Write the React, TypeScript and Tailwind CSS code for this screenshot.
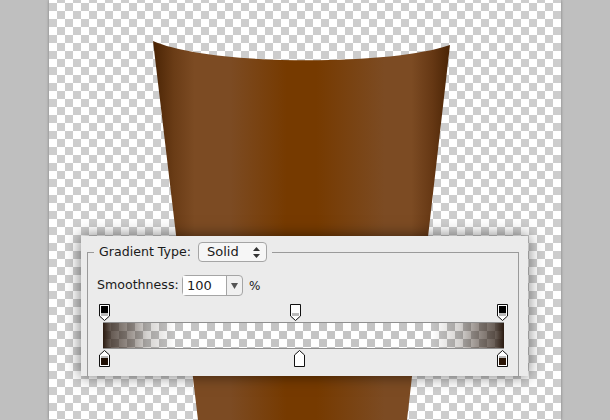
const Stop = ({ dir, fill, band }: { dir: 'down' | 'up'; fill: string; band: string }) => (
  <svg width="11" height="17" viewBox="0 0 11 17" className="block">
    {dir === 'down' ? (
      <>
        <path d="M.5.5h10v11.500l-5 4.500-5-4.500z" fill="#fff" stroke="#111" />
        <rect x="2" y="2" width="7" height="7" fill={fill} />
        <rect x="2" y="9" width="7" height="3" fill={band} />
      </>
    ) : (
      <>
        <path d="M5.500.5l5 4.500v11.500H.5V5z" fill="#fff" stroke="#111" />
        <rect x="2" y="6" width="7" height="2" fill={band} />
        <rect x="2" y="8" width="7" height="7" fill={fill} />
      </>
    )}
  </svg>
);

const App = () => {
  return (
    <div className="flex h-[420px] w-[610px] overflow-hidden bg-[#bfbfbf] font-['DejaVu_Sans',sans-serif] text-[#1a1a1a]">
      <div className="relative ml-[49px] h-full w-[512px] bg-white bg-[conic-gradient(#cdcdcd_25%,#fff_0_50%,#cdcdcd_0_75%,#fff_0)] bg-size-[16px_16px] bg-position-[0_-5px] shadow-[0_0_3px_rgba(0,0,0,0.35)]">
        {/* Cup */}
        <svg width="512" height="420" viewBox="49 0 512 420" className="absolute left-0 top-0">
          <defs>
            <linearGradient id="cup" gradientUnits="userSpaceOnUse" x1="153" y1="0" x2="450" y2="0">
              <stop offset="0" stopColor="#4a2405" />
              <stop offset="0.07" stopColor="#6a3c16" />
              <stop offset="0.14" stopColor="#7c4b23" />
              <stop offset="0.26" stopColor="#7c4b23" />
              <stop offset="0.45" stopColor="#763a00" />
              <stop offset="0.55" stopColor="#763a00" />
              <stop offset="0.78" stopColor="#7c4b23" />
              <stop offset="0.87" stopColor="#7c4b23" />
              <stop offset="0.94" stopColor="#663814" />
              <stop offset="1" stopColor="#4a2405" />
            </linearGradient>
          </defs>
          <path d="M153 41C210 66 390 66 450 45L407 420H198Z" fill="url(#cup)" />
        </svg>

        {/* Gradient editor panel */}
        <div className="absolute left-[32px] top-[236px] h-[140px] w-[447px] bg-[#ebebeb] pl-[6px] pr-[9px] shadow-[0_0_14px_rgba(0,0,0,0.55)]">
          <fieldset className="mt-[6px] h-[134px] border border-b-0 border-[#9a9a9a] pl-[9px]">
            <legend className="-ml-[3px] flex h-5 items-center gap-[7px] px-[5px]">
              <span className="text-[12.6px]">Gradient Type:</span>
              <span className="flex h-5 w-[69px] items-center justify-between rounded-[4px] border border-[#a5a5a5] bg-[#f6f6f6] pl-2 pr-[6px] text-[13px]">
                Solid
                <svg width="7" height="11" viewBox="0 0 7 11">
                  <path d="M3.500 0L7 4H0zM3.500 11L0 7h7z" fill="#333" />
                </svg>
              </span>
            </legend>

            <div className="mt-[13px] flex h-[21px] items-center">
              <span className="w-[85px] text-[12.6px]">Smoothness:</span>
              <span className="flex h-[21px] w-[61px] rounded-[4px] border border-[#a5a5a5] bg-[#f0f0f0]">
                <span className="w-[44px] border-r border-[#a5a5a5] bg-white pl-1 text-[13px] leading-[20px]">100</span>
                <span className="flex flex-1 items-center justify-center">
                  <svg width="7" height="6" viewBox="0 0 7 6">
                    <path d="M0 0h7L3.500 6z" fill="#555" />
                  </svg>
                </span>
              </span>
              <span className="ml-[6px] text-[12px]">%</span>
            </div>

            <div className="ml-[2px] mt-[8px] flex">
              <Stop dir="down" fill="#000" band="#bbb" />
              <div className="ml-[180px]">
                <Stop dir="down" fill="#fff" band="#bbb" />
              </div>
              <div className="ml-[196px]">
                <Stop dir="down" fill="#000" band="#bbb" />
              </div>
            </div>

            {/* Gradient preview */}
            <div className="ml-[6px] mt-[1px] h-[27px] w-[401px] border-y border-[#8f8f8f] bg-[linear-gradient(90deg,#2a1a10,rgba(50,35,25,0.75)_2%,rgba(60,45,35,0.5)_7%,rgba(60,50,40,0.22)_11%,rgba(60,50,40,0)_18%,rgba(60,50,40,0)_82%,rgba(60,50,40,0.22)_89%,rgba(60,45,35,0.5)_93%,rgba(50,35,25,0.75)_98%,#2a1a10),repeating-conic-gradient(#c4c4c4_0_25%,#ffffff_0_50%)] bg-size-[100%_100%,16px_16px]" />

            <div className="ml-[2px] mt-[1px] flex">
              <Stop dir="up" fill="#201005" band="#bbb" />
              <div className="ml-[184px]">
                <Stop dir="up" fill="#fff" band="#fff" />
              </div>
              <div className="ml-[192px]">
                <Stop dir="up" fill="#2a1505" band="#bbb" />
              </div>
            </div>
          </fieldset>
        </div>
      </div>
    </div>
  );
};

export default App;
